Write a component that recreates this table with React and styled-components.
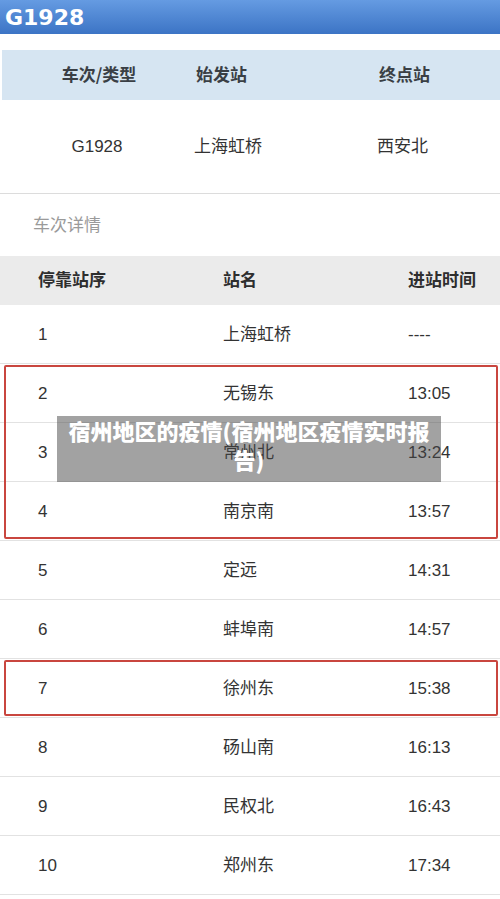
import React from 'react';
import styled, { createGlobalStyle } from 'styled-components';

const GlobalStyle = createGlobalStyle`
  html, body {
    margin: 0;
    padding: 0;
    background: #fff;
  }
  body {
    font-family: "Noto Sans CJK SC", sans-serif;
    color: #333;
  }
`;

const Page = styled.div`
  position: relative;
  width: 500px;
  height: 899px;
  overflow: hidden;
  background: #fff;
`;

const TopBar = styled.div`
  height: 34px;
  background: linear-gradient(#659be2, #3c74c5);
  display: flex;
  align-items: center;
  padding-left: 5px;
  color: #fff;
  font-family: "DejaVu Sans", sans-serif;
  font-weight: bold;
  font-size: 22px;
  margin-bottom: 16px;
`;

const InfoGrid = styled.div`
  display: grid;
  grid-template-columns: 194px 183px 1fr;
  align-items: center;
  height: ${p => p.h}px;
  background: ${p => (p.head ? '#d6e5f2' : '#fff')};
  border-bottom: ${p => (p.head ? 'none' : '1px solid #dcdcdc')};
  margin-left: ${p => (p.head ? '2px' : '0')};
  font-size: 17px;
  font-weight: ${p => (p.head ? 'bold' : 'normal')};
  color: ${p => (p.head ? '#3a3f45' : '#333')};
`;

const Cell = styled.div`
  line-height: 1;
  text-align: ${p => (p.center ? 'center' : 'left')};
  padding-bottom: ${p => (p.num ? '0' : '4px')};
  font-family: ${p => (p.num ? '"Liberation Sans", sans-serif' : '"Noto Sans CJK SC", sans-serif')};
`;

const SectionTitle = styled.div`
  height: 62px;
  box-sizing: border-box;
  display: flex;
  align-items: center;
  padding: 0 0 4px 33px;
  font-size: 17px;
  line-height: 1;
  color: #9a9a9a;
`;

const Row = styled.div`
  display: grid;
  grid-template-columns: 185px 185px 1fr;
  align-items: center;
  box-sizing: border-box;
  height: ${p => (p.head ? 49 : 59)}px;
  padding-left: 38px;
  background: ${p => (p.head ? '#ebebeb' : '#fff')};
  border-bottom: ${p => (p.head ? 'none' : '1px solid #e2e2e2')};
  font-size: 17px;
  font-weight: ${p => (p.head ? 'bold' : 'normal')};
  color: ${p => (p.head ? '#2e2e2e' : '#333')};
`;

const Highlight = styled.div`
  position: relative;
  &::after {
    content: '';
    position: absolute;
    top: 1px;
    bottom: 2px;
    left: 4px;
    right: 2px;
    border: 2px solid #c9463f;
    border-radius: 2px;
    pointer-events: none;
  }
`;

const Caption = styled.div`
  position: absolute;
  top: 416px;
  left: 57px;
  width: 384px;
  height: 66px;
  box-sizing: border-box;
  padding: 0 10px;
  background: rgba(70, 70, 70, 0.5);
  color: #fff;
  font-weight: 900;
  font-size: 22px;
  line-height: 29px;
  text-align: center;
`;

const stops = [
  ['1', '上海虹桥', '----'],
  ['2', '无锡东', '13:05'],
  ['3', '常州北', '13:24'],
  ['4', '南京南', '13:57'],
  ['5', '定远', '14:31'],
  ['6', '蚌埠南', '14:57'],
  ['7', '徐州东', '15:38'],
  ['8', '砀山南', '16:13'],
  ['9', '民权北', '16:43'],
  ['10', '郑州东', '17:34'],
];

function StopRow({ stop }) {
  return (
    <Row>
      <Cell num>{stop[0]}</Cell>
      <Cell>{stop[1]}</Cell>
      <Cell num>{stop[2]}</Cell>
    </Row>
  );
}

export default function App() {
  return (
    <Page>
      <GlobalStyle />
      <TopBar>G1928</TopBar>

      <InfoGrid head h={50}>
        <Cell center>车次/类型</Cell>
        <Cell>始发站</Cell>
        <Cell>终点站</Cell>
      </InfoGrid>
      <InfoGrid h={93}>
        <Cell center num>G1928</Cell>
        <Cell>上海虹桥</Cell>
        <Cell>西安北</Cell>
      </InfoGrid>

      <SectionTitle>车次详情</SectionTitle>

      <Row head>
        <Cell>停靠站序</Cell>
        <Cell>站名</Cell>
        <Cell>进站时间</Cell>
      </Row>

      <StopRow stop={stops[0]} />
      <Highlight>
        {stops.slice(1, 4).map(s => <StopRow key={s[0]} stop={s} />)}
      </Highlight>
      {stops.slice(4, 6).map(s => <StopRow key={s[0]} stop={s} />)}
      <Highlight>
        <StopRow stop={stops[6]} />
      </Highlight>
      {stops.slice(7).map(s => <StopRow key={s[0]} stop={s} />)}

      <Caption>宿州地区的疫情(宿州地区疫情实时报告)</Caption>
    </Page>
  );
}
